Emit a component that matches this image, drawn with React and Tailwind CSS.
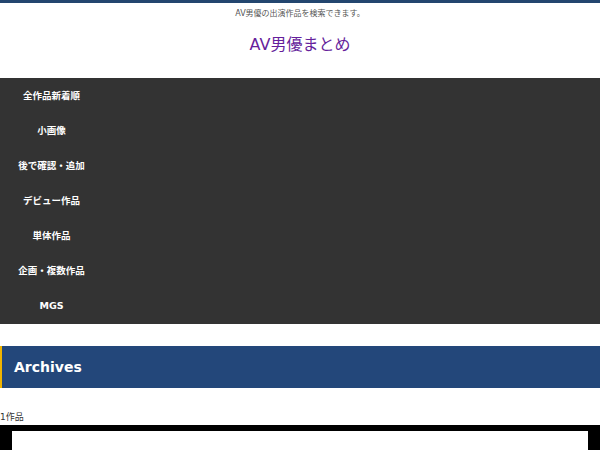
import React from 'react';

const navItems = ['全作品新着順', '小画像', '後で確認・追加', 'デビュー作品', '単体作品', '企画・複数作品', 'MGS'];

const App = () => {
  return (
    <div className="min-h-screen bg-white" style={{ fontFamily: '"DejaVu Sans", "Noto Sans CJK JP", sans-serif' }}>
      {/* ヘッダー */}
      <div className="h-[3px] bg-[#23466f]" />
      <header className="text-center">
        <p className="pt-[4px] text-[8px] leading-[14px] text-[#555]">AV男優の出演作品を検索できます。</p>
        <h1 className="pt-[12px] pb-[21px] text-[16px] leading-[24px] text-[#661f9c]">AV男優まとめ</h1>
      </header>

      {/* ナビ */}
      <nav className="bg-[#333333] pb-px">
        <ul>
          {navItems.map((item) => (
            <li key={item} className="w-[103px] h-[35px] flex items-center justify-center pt-px text-[9.5px] font-bold text-white">
              {item}
            </li>
          ))}
        </ul>
      </nav>

      {/* アーカイブ */}
      <div className="mt-[22px] h-[42px] flex items-center bg-[#23477a] border-l-[2px] border-[#f0b400] pl-[12px]">
        <h2 className="text-[14px] font-bold text-white">Archives</h2>
      </div>

      <p className="mt-[23px] text-[9px] leading-[12px] text-[#333]">1作品</p>

      <div className="mt-[2px] bg-black px-[12px] pt-[6px]">
        <div className="h-[40px] bg-white" />
      </div>
    </div>
  );
};

export default App;
